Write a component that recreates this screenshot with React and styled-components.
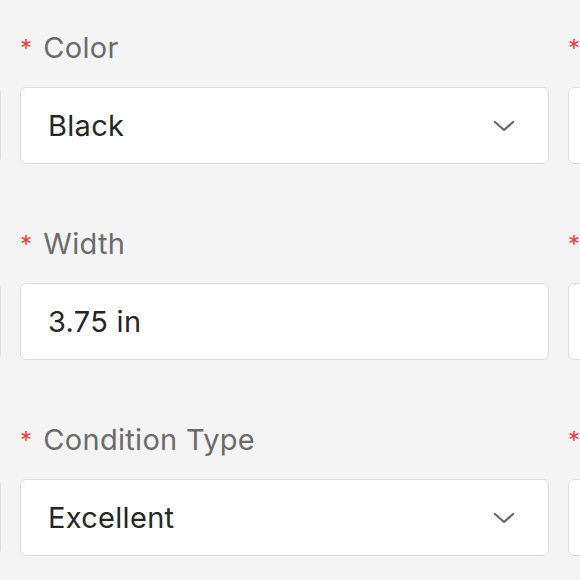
import React from 'react';
import styled, {createGlobalStyle} from 'styled-components';

const Global = createGlobalStyle`
    html, body { margin:0; padding:0; background:#f4f4f4; }
    body { font-family: Inter, "Noto Sans", sans-serif; overflow:hidden; }
`
const Page = styled.div`
    width:580px; height:580px; overflow:hidden;
    background:#f4f4f4; padding-top:29px; box-sizing:border-box;
`
const Grid = styled.div`
    display:grid;
    grid-template-columns: repeat(3, 529px);
    column-gap:19px; row-gap:61px;
    margin-left:-528px;
`
const Field = styled.div`
    display:flex; flex-direction:column; gap:22px;
`
const Label = styled.div`
    height:36px; display:flex; align-items:center;
    font-size:29px; color:#6b6b6b; letter-spacing:0.3px;
`
const Star = styled.span`
    color:#e8413c; font-size:24px; margin-right:11px; margin-top:2px;
`
const Box = styled.div`
    height:77px; box-sizing:border-box;
    background:#fff; border:1px solid #dcdcdc; border-radius:6px;
    display:flex; align-items:center; justify-content:space-between;
    padding: 0 33px 0 27px;
    font-size:29px; color:#262626; letter-spacing:0.3px;
`
const Chevron = () => (
    <svg width="22" height="12" viewBox="0 0 22 12" fill="none">
        <path d="M2 2 L11 10 L20 2" stroke="#666" strokeWidth="2.2" strokeLinecap="round" strokeLinejoin="round" />
    </svg>
);

const rows = [
    [{label:"Size", value:"Medium", select:true}, {label:"Color", value:"Black", select:true}, {label:"Material", value:"", select:true}],
    [{label:"Length", value:"9 in"}, {label:"Width", value:"3.75 in"}, {label:"Height", value:""}],
    [{label:"Brand", value:"", select:true}, {label:"Condition Type", value:"Excellent", select:true}, {label:"Style", value:"", select:true}],
];

export default function App () {
    return (
        <>
            <Global />
            <Page>
                <Grid>
                    {rows.flat().map((f, i) => (
                        <Field key={i}>
                            <Label><Star>*</Star>{f.label}</Label>
                            <Box>
                                <span>{f.value}</span>
                                {f.select && <Chevron />}
                            </Box>
                        </Field>
                    ))}
                </Grid>
            </Page>
        </>
    );
}
